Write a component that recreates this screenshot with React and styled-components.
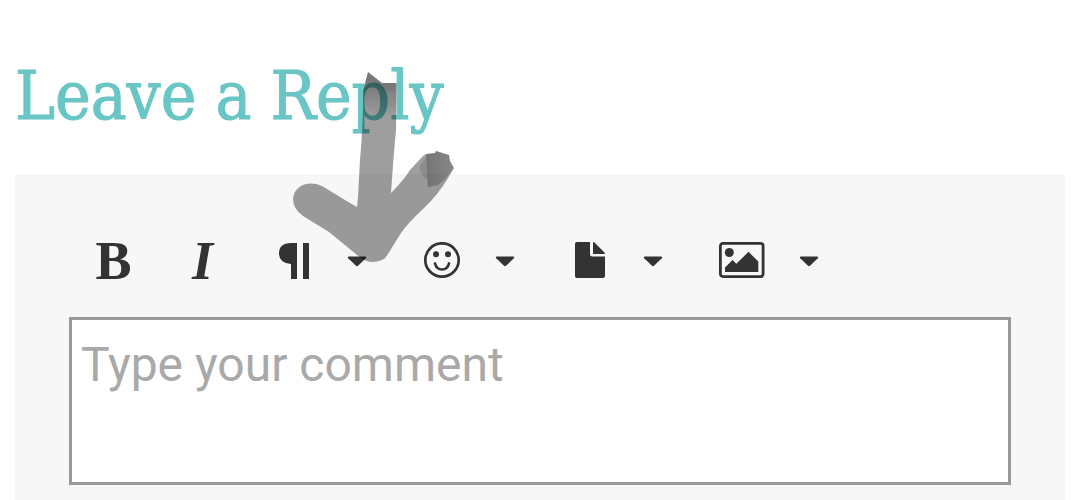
import React from "react";
import styled, { createGlobalStyle } from "styled-components";

const GlobalStyle = createGlobalStyle`
  * { box-sizing: border-box; }
  body { margin: 0; background: #fff; }
`;

const Page = styled.main`
  position: relative;
  display: flex;
  flex-direction: column;
  min-height: 100vh;
  padding: 48px 11px 0 15px;
`;

const Title = styled.h2`
  margin: 0 0 30px;
  font-family: "DejaVu Serif Condensed", "DejaVu Serif", serif;
  font-size: 67px;
  font-weight: 400;
  line-height: 96px;
  color: #69c6c4;
  -webkit-text-stroke: 1px #69c6c4;
  white-space: nowrap;
`;

const CommentForm = styled.form`
  flex: 1;
  display: flex;
  flex-direction: column;
  padding: 54px 54px 15px;
  background: #f7f7f7;
`;

const Toolbar = styled.div`
  display: flex;
  height: 66px;
  margin-bottom: 23px;
`;

const ToolButton = styled.button`
  display: flex;
  align-items: center;
  justify-content: center;
  gap: 34px;
  padding: 0 28px;
  border: 0;
  background: transparent;
  color: #333;
  cursor: pointer;
`;

const LetterButton = styled(ToolButton)`
  width: 89px;
  padding: 0;
  font-family: "Liberation Serif", serif;
  font-size: 54px;
  font-weight: 700;
  font-style: ${(p) => (p.$italic ? "italic" : "normal")};
  line-height: 66px;
`;

const Icon = styled.svg`
  display: block;
  flex: none;
  width: ${(p) => p.$width || 38}px;
  height: 38px;
  fill: currentColor;
`;

const CommentBox = styled.textarea`
  display: block;
  width: 100%;
  height: 168px;
  margin: 0;
  padding: 17px 9px;
  border: 3px solid #999;
  border-radius: 0;
  outline: 0;
  resize: none;
  background: #fff;
  color: #333;
  font-family: Roboto, sans-serif;
  font-size: 48px;
  line-height: 56px;
  &::placeholder { color: #a9a9a9; opacity: 1; }
`;

const Marker = styled.svg`
  position: absolute;
  top: 64px;
  left: 284px;
  width: 180px;
  height: 208px;
  pointer-events: none;
`;

const Caret = () => (
  <Icon $width={20} viewBox="0 0 20 38" aria-hidden="true">
    <path d="M2 14.500H18Q20 14.800 18.800 16.300L11 23.800Q10 24.700 9 23.800L1.200 16.300Q0 14.800 2 14.500Z" />
  </Icon>
);

const ParagraphIcon = () => (
  <Icon viewBox="0 0 38 38" aria-hidden="true">
    <path d="M16 1H22V37H16V22Q4 21 4 11.5Q4 1 16 1ZM28 1H34V37H28Z" />
  </Icon>
);

const SmileIcon = () => (
  <Icon viewBox="0 0 38 38" aria-hidden="true">
    <circle cx="19" cy="18" r="16.7" fill="none" stroke="currentColor" strokeWidth="2.7" />
    <circle cx="13" cy="12.200" r="3" />
    <circle cx="25" cy="12.200" r="3" />
    <path d="M12 21.500C14 29.500 24 29.500 26 21.500" fill="none" stroke="currentColor" strokeWidth="2.7" strokeLinecap="round" />
  </Icon>
);

const FileIcon = () => (
  <Icon viewBox="0 0 38 38" aria-hidden="true">
    <path d="M6 0H19V12Q19 14.500 21.5 14.500H34V34Q34 36 32 36H6Q4 36 4 34V2Q4 0 6 0ZM22 0Q23 0 24 1L33 10Q34 11 34 12H22Z" />
  </Icon>
);

const ImageIcon = () => (
  <Icon $width={46} viewBox="0 0 46 38" aria-hidden="true">
    <rect x="1.4" y="1.4" width="42.7" height="33.2" rx="2.5" fill="none" stroke="currentColor" strokeWidth="2.8" />
    <circle cx="10.3" cy="10.500" r="4.5" />
    <path d="M6 30V25.500L13.500 18L17.300 21.800L29.500 9.800L39.300 19.500V30Z" />
  </Icon>
);

export default function App() {
  return (
    <>
      <GlobalStyle />
      <Page>
        <Title>Leave a Reply</Title>
        <CommentForm onSubmit={(e) => e.preventDefault()}>
          <Toolbar role="toolbar" aria-label="Formatting">
            <LetterButton type="button" aria-label="Bold">B</LetterButton>
            <LetterButton type="button" aria-label="Italic" $italic>I</LetterButton>
            <ToolButton type="button" aria-label="Paragraph format"><ParagraphIcon /><Caret /></ToolButton>
            <ToolButton type="button" aria-label="Emoticons"><SmileIcon /><Caret /></ToolButton>
            <ToolButton type="button" aria-label="Insert file"><FileIcon /><Caret /></ToolButton>
            <ToolButton type="button" aria-label="Insert image"><ImageIcon /><Caret /></ToolButton>
          </Toolbar>
          <CommentBox aria-label="Comment" placeholder="Type your comment" />
        </CommentForm>
        <Marker viewBox="284 64 180 208" aria-hidden="true">
          <defs>
            <linearGradient id="shaftTip" x1="0" y1="0" x2="0" y2="1">
              <stop offset="0" stopOpacity=".24" />
              <stop offset="1" stopOpacity="0" />
            </linearGradient>
            <linearGradient id="headTip" x1="0" y1="0" x2="1" y2="0">
              <stop offset="0" stopOpacity=".26" />
              <stop offset="1" stopOpacity=".14" />
            </linearGradient>
          </defs>
          <path
            fillOpacity=".38"
            d="M368 72L382 83H396.500L396 130Q394 150 391 193Q403 181 410 170L423 156L426 154L435 153L436 151L449 155L450 161L454 168L448 178Q438 195 424 208Q407 224 401 233L388 254Q384 262 372 262Q365 262 357 255L329 232L303 216Q293 209 293 199C294 185 309 180 322 186L345 200L357 207L358 197L360 160Q363 125 363 105L363 91Z"
          />
          <path fillOpacity=".24" d="M368 72L382 83H396.500L393 91L383 89L374 84L364 87Z" />
          <path fill="url(#shaftTip)" d="M364 87L374 84L383 89L393 91L396.500 83V118H364Z" />
          <path fill="url(#headTip)" d="M426 154L435 153L436 151L449 155L450 161L454 168L444 180L438 185L428 187L427 176Z" />
          <path fillOpacity=".1" d="M426 157L419 167L422 175L427 180Z" />
        </Marker>
      </Page>
    </>
  );
}
